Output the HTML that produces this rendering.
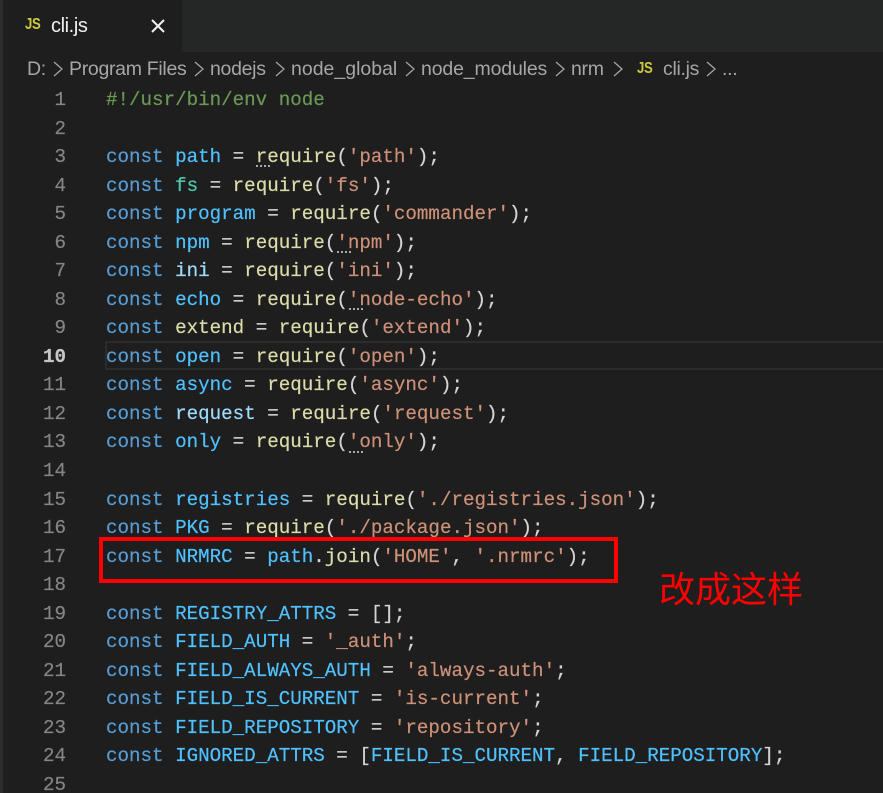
<!DOCTYPE html>
<html><head><meta charset="utf-8"><style>
html,body{margin:0;padding:0;background:#1e1e1e}
#r{position:relative;width:883px;height:793px;overflow:hidden;background:#1e1e1e;font-family:"Liberation Mono",monospace;font-size:19.2px;color:#d4d4d4}
.a{position:absolute}
.l{position:absolute;left:106px;margin-top:1px;height:28px;line-height:28px;white-space:pre;-webkit-text-stroke:.2px}
.n{position:absolute;left:30px;margin-top:1px;width:36px;text-align:right;height:28px;line-height:28px;color:#858585;-webkit-text-stroke:.2px}
.u{font-family:"Liberation Sans",sans-serif;white-space:pre;color:#a6a6a6;font-size:19.5px;line-height:24px;top:57px;letter-spacing:-.3px}
.j{font:bold 16px/18px 'Liberation Sans',sans-serif;color:#cbcb41;letter-spacing:-.4px;transform:scaleX(.82);transform-origin:0 50%}
.k{color:#569cd6}.v{color:#4fc1ff}.w{color:#9cdcfe}.f{color:#dcdcaa}.s{color:#ce9178}.g{color:#6a9955}.t{color:#4ec9b0}
.d{position:absolute;height:2px;width:14px;background-image:linear-gradient(90deg,#aaa 2px,transparent 2px);background-size:4px 2px}
</style></head><body><div id="r">
<div class="a" style="left:0;top:0;width:3px;height:793px;background:#2d2d2d"></div>
<div class="a" style="left:182px;top:0;width:701px;height:52px;background:#252626"></div>
<div class="a j" style="left:25px;top:16px">JS</div>
<div class="a" style="left:51px;top:14px;font:20px/24px 'Liberation Sans',sans-serif;color:#f0f0f0;letter-spacing:-.4px">cli.js</div>
<svg class="a" style="left:150px;top:18px" width="16" height="16"><path d="M2 2L14 14M14 2L2 14" stroke="#f2f2f2" stroke-width="2" fill="none"/></svg>

<div class="a u" style="left:27px">D:</div>
<div class="a u" style="left:69px">Program Files</div>
<div class="a u" style="left:210px">nodejs</div>
<div class="a u" style="left:291px;letter-spacing:0">node_global</div>
<div class="a u" style="left:421px;letter-spacing:-.15px">node_modules</div>
<div class="a u" style="left:571px">nrm</div>
<div class="a j" style="left:637px;top:60px">JS</div>
<div class="a u" style="left:663px">cli.js</div>
<div class="a u" style="left:722px">...</div>
<svg class="a" style="left:0;top:58px" width="883" height="22" fill="none" stroke="#a6a6a6" stroke-width="1.3"><path d="M54 4L62 11L54 18M195 4L203 11L195 18M276 4L284 11L276 18M406 4L414 11L406 18M556 4L564 11L556 18M614 4L622 11L614 18M707 4L715 11L707 18"/></svg>

<div class="a" style="left:105px;top:341px;width:778px;height:29px;border:2px solid #2c2c2c;border-right:0;box-sizing:border-box"></div>

<div class="n" style="top:85px">1</div><div class="n" style="top:114px">2</div><div class="n" style="top:142px">3</div><div class="n" style="top:171px">4</div><div class="n" style="top:199px">5</div><div class="n" style="top:228px">6</div><div class="n" style="top:256px">7</div><div class="n" style="top:285px">8</div><div class="n" style="top:313px">9</div><div class="n" style="top:342px;color:#c6c6c6;font-weight:bold">10</div><div class="n" style="top:370px">11</div><div class="n" style="top:399px">12</div><div class="n" style="top:427px">13</div><div class="n" style="top:456px">14</div><div class="n" style="top:485px">15</div><div class="n" style="top:513px">16</div><div class="n" style="top:542px">17</div><div class="n" style="top:570px">18</div><div class="n" style="top:599px">19</div><div class="n" style="top:627px">20</div><div class="n" style="top:656px">21</div><div class="n" style="top:684px">22</div><div class="n" style="top:713px">23</div><div class="n" style="top:741px">24</div><div class="n" style="top:770px">25</div>

<div class="l g" style="top:85px">#!/usr/bin/env node</div>
<div class="l" style="top:142px"><span class="k">const</span> <span class="v">path</span> = <span class="f">require</span>(<span class="s">'path'</span>);</div>
<div class="l" style="top:171px"><span class="k">const</span> <span class="t">fs</span> = <span class="f">require</span>(<span class="s">'fs'</span>);</div>
<div class="l" style="top:199px"><span class="k">const</span> <span class="v">program</span> = <span class="f">require</span>(<span class="s">'commander'</span>);</div>
<div class="l" style="top:228px"><span class="k">const</span> <span class="v">npm</span> = <span class="f">require</span>(<span class="s">'npm'</span>);</div>
<div class="l" style="top:256px"><span class="k">const</span> <span class="w">ini</span> = <span class="f">require</span>(<span class="s">'ini'</span>);</div>
<div class="l" style="top:285px"><span class="k">const</span> <span class="v">echo</span> = <span class="f">require</span>(<span class="s">'node-echo'</span>);</div>
<div class="l" style="top:313px"><span class="k">const</span> <span class="f">extend</span> = <span class="f">require</span>(<span class="s">'extend'</span>);</div>
<div class="l" style="top:342px"><span class="k">const</span> <span class="v">open</span> = <span class="f">require</span>(<span class="s">'open'</span>);</div>
<div class="l" style="top:370px"><span class="k">const</span> <span class="v">async</span> = <span class="f">require</span>(<span class="s">'async'</span>);</div>
<div class="l" style="top:399px"><span class="k">const</span> <span class="w">request</span> = <span class="f">require</span>(<span class="s">'request'</span>);</div>
<div class="l" style="top:427px"><span class="k">const</span> <span class="v">only</span> = <span class="f">require</span>(<span class="s">'only'</span>);</div>
<div class="l" style="top:485px"><span class="k">const</span> <span class="v">registries</span> = <span class="f">require</span>(<span class="s">'./registries.json'</span>);</div>
<div class="l" style="top:513px"><span class="k">const</span> <span class="v">PKG</span> = <span class="f">require</span>(<span class="s">'./package.json'</span>);</div>
<div class="l" style="top:542px"><span class="k">const</span> <span class="v">NRMRC</span> = <span class="v">path</span>.<span class="f">join</span>(<span class="s">'HOME'</span>, <span class="s">'.nrmrc'</span>);</div>
<div class="l" style="top:599px"><span class="k">const</span> <span class="v">REGISTRY_ATTRS</span> = [];</div>
<div class="l" style="top:627px"><span class="k">const</span> <span class="v">FIELD_AUTH</span> = <span class="s">'_auth'</span>;</div>
<div class="l" style="top:656px"><span class="k">const</span> <span class="v">FIELD_ALWAYS_AUTH</span> = <span class="s">'always-auth'</span>;</div>
<div class="l" style="top:684px"><span class="k">const</span> <span class="v">FIELD_IS_CURRENT</span> = <span class="s">'is-current'</span>;</div>
<div class="l" style="top:713px"><span class="k">const</span> <span class="v">FIELD_REPOSITORY</span> = <span class="s">'repository'</span>;</div>
<div class="l" style="top:741px"><span class="k">const</span> <span class="v">IGNORED_ATTRS</span> = [<span class="v">FIELD_IS_CURRENT</span>, <span class="v">FIELD_REPOSITORY</span>];</div>

<div class="d" style="left:256px;top:165px"></div>
<div class="d" style="left:337px;top:251px"></div>
<div class="d" style="left:349px;top:308px"></div>
<div class="d" style="left:349px;top:451px"></div>

<div class="a" style="left:99px;top:537px;width:519px;height:46px;border:4px solid #f00;box-sizing:border-box"></div>
<div class="a" style="left:659px;top:565px;font:36px/44px 'Noto Sans CJK SC','WenQuanYi Zen Hei',sans-serif;color:#f00;white-space:nowrap">改成这样</div>
</div></body></html>
